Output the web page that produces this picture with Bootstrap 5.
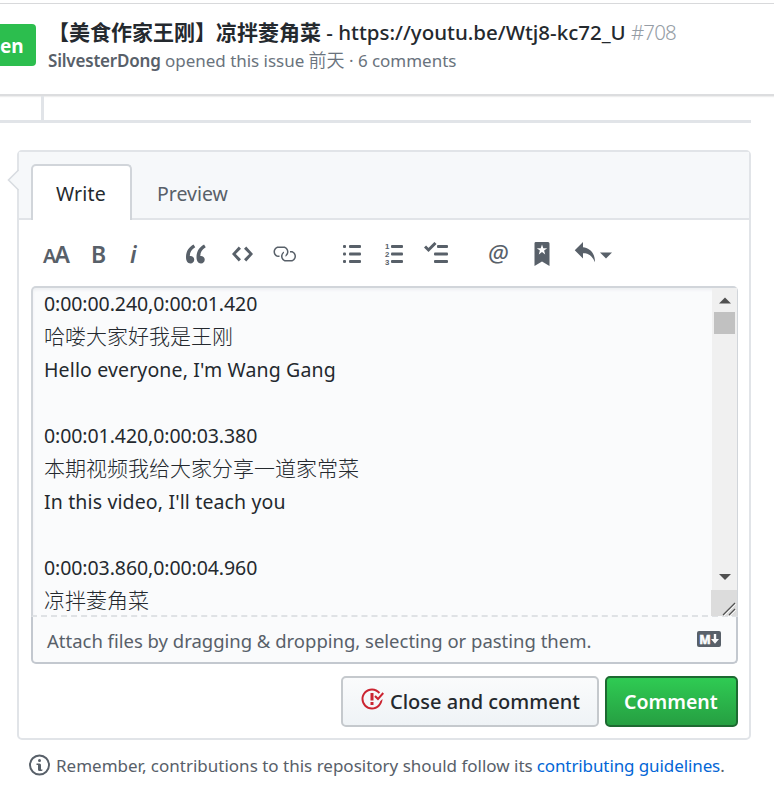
<!DOCTYPE html>
<html lang="en">
<head>
<meta charset="utf-8">
<title>Issue #708</title>
<link href="https://cdn.jsdelivr.net/npm/bootstrap@5.3.0/dist/css/bootstrap.min.css" rel="stylesheet">
<style>
body{width:774px;height:794px;overflow:hidden;background:#fff;color:#24292e;font-family:"Noto Sans","Noto Sans CJK SC",sans-serif;font-size:19.5px;line-height:33px}
svg{display:block;fill:currentColor;flex:none}
.text-line{white-space:nowrap}
.han{font-family:"Noto Sans CJK SC",sans-serif;font-size:21px;letter-spacing:0;font-weight:300}
.issue-head{height:93px;margin-top:3px;border-top:1px solid #d8d9db;border-bottom:2px solid #dcdddf;box-shadow:0 1px 1px #eee;padding-top:13px}
.state-tag{width:36px;height:42px;margin-top:7px;background:#2cbe4e;color:#fff;border-radius:0 4px 4px 0;font-weight:700;font-size:19px;line-height:44px;overflow:hidden}
.head-text{margin-left:12px}
.issue-title{font-weight:500;font-size:20.5px;line-height:28px;height:28px}
.issue-title .han{font-weight:700}
.issue-title .num{color:#959da5;font-weight:300;letter-spacing:-.9px}
.issue-meta{font-size:17px;line-height:28px;height:28px;color:#6a737d;letter-spacing:-.03px}
.issue-meta .han{font-size:18px;font-weight:350}
.issue-meta b{font-weight:600;color:#586069;letter-spacing:-.2px}
.thread-end{width:751px;height:27px;border-bottom:3px solid #e1e4e8;padding-left:41px}
.thread-end i{display:block;width:3px;height:24px;background:#e1e4e8}
.panel{position:relative;width:734px;height:590px;margin:27px 0 0 17px;border:2px solid #e1e4e8;border-radius:5px}
.pointer{position:absolute;left:-12px;top:16px}
.tabs{height:68px;background:#f6f8fa;border-bottom:2px solid #e1e4e8;padding:12px 0 0 12px}
.tab-on{width:101px;height:56px;background:#fff;border:2px solid #d1d5da;border-bottom:0;border-radius:5px 5px 0 0;padding-left:23px;line-height:55px;letter-spacing:.15px}
.tab-off{padding-left:25px;line-height:59px;color:#586069}
.tools{display:grid;grid-template-columns:48px 39px 56px 46px 40px 71px 42px 39px 65px 45px 40px 26px 20px;height:66px;padding:2px 0 0 24px;align-items:center;color:#586069}
.glyph{font-size:23px;font-weight:600;line-height:30px;height:31px}
.size-pair{letter-spacing:-1.6px;white-space:nowrap}
.size-pair small{font-size:19.5px}
.at-sign{font-size:24px;font-weight:400;height:33px;margin-left:-1px}
.editor{width:707px;height:331px;margin-left:12px;border:2px solid #d1d5da;border-right-width:1px;border-bottom:2px dashed #dfe2e5;border-radius:5px 5px 0 0;background:#fafbfc;box-shadow:inset 0 2px 3px #edeff2}
.editor-text{flex:1;padding-left:11px;margin-top:-1px}
.editor-text div{height:33px;letter-spacing:.14px}
.editor-text .stamp{letter-spacing:-.08px}
.editor-text .han{line-height:31px;letter-spacing:0}
.bar{width:25px;height:328px;background:#f0f0f0;color:#505050}
.thumb{width:21px;height:22px;background:#c1c1c1;margin:8px 0 0 2px}
.corner{width:26px;height:26px;margin-left:-1px;background:#dcdcdc;color:#505050}
.attach{width:707px;height:47px;margin-left:12px;border:2px solid #c3c8cf;border-top:0;border-radius:0 0 5px 5px;background:#fafbfc;padding:2px 15px 0 14px;color:#586069;font-size:18.5px;letter-spacing:-.01px}
.attach svg{margin-top:-3px}
.actions{margin:12px 11px 0 0;gap:6px}
.act{height:51px;border-radius:5px;font-weight:600;border:2px solid #c5c9cd;padding:0;font-size:19.5px}
.act-close{width:258px;background:linear-gradient(#fafbfc,#eff3f6);color:#24292e;padding-left:17px;font-weight:500;font-size:20px}
.act-close svg{color:#cb2431;margin:-6px 6px 0 0}
.act-send{width:133px;background:linear-gradient(#2fcb53,#269f42);border-color:#1d6a31;color:#fff;padding-left:17px}
.note{margin:9px 0 0 29px;color:#586069;font-size:17px}
.note svg{margin:-1px 6px 0 0}
.note a{color:#0366d6;margin-left:4px;letter-spacing:-.1px}
</style>
<script src="https://cdn.jsdelivr.net/npm/bootstrap@5.3.0/dist/js/bootstrap.bundle.min.js"></script>
</head>
<body>
<header class="issue-head d-flex">
  <div class="state-tag">en</div>
  <div class="head-text text-line">
    <div class="issue-title"><span class="han">【美食作家王刚】凉拌菱角菜</span> - https://youtu.be/Wtj8-kc72_U <span class="num">#708</span></div>
    <div class="issue-meta"><b>SilvesterDong</b> opened this issue <span class="han">前天</span> · 6 comments</div>
  </div>
</header>
<div class="thread-end"><i></i></div>
<main class="panel">
  <svg class="pointer" width="13" height="24" viewBox="0 0 13 24"><path d="M13 1 2 12l11 11z" fill="#f6f8fa"/><path d="M11.500 2 1.500 12l10 10" fill="none" stroke="#d8dce1" stroke-width="1.6"/></svg>
  <div class="tabs d-flex"><div class="tab-on">Write</div><div class="tab-off">Preview</div></div>
  <div class="tools">
    <span class="glyph size-pair"><small>A</small>A</span>
    <span class="glyph">B</span>
    <span class="glyph fst-italic">i</span>
    <svg width="21" height="24" viewBox="0 0 14 16"><path d="M6.160 3.500C3.730 5.060 2.550 6.670 2.550 9.360c.16-.05.3-.05.44-.05 1.270 0 2.500.86 2.500 2.410 0 1.610-1.030 2.610-2.500 2.610-1.900 0-2.990-1.520-2.990-4.250 0-3.800 1.750-6.530 5.020-8.420L6.160 3.500zm7 0c-2.430 1.560-3.610 3.170-3.610 5.860.16-.05.3-.05.44-.05 1.270 0 2.500.86 2.500 2.410 0 1.610-1.030 2.610-2.500 2.610-1.890 0-2.980-1.520-2.980-4.250 0-3.800 1.750-6.530 5.020-8.420l1.140 1.840z"/></svg>
    <svg width="21" height="24" viewBox="0 0 14 16"><path d="M9.500 3L8 4.500 11.500 8 8 11.500 9.500 13 14 8 9.500 3zm-5 0L0 8l4.500 5L6 11.500 2.500 8 6 4.500 4.500 3z"/></svg>
    <svg width="24" height="24" viewBox="0 0 16 16"><path d="M4 9h1v1H4c-1.500 0-3-1.690-3-3.500S2.550 3 4 3h4c1.450 0 3 1.690 3 3.500 0 1.410-.91 2.720-2 3.250V8.590c.58-.45 1-1.270 1-2.090C10 5.220 8.980 4 8 4H4c-.98 0-2 1.220-2 2.500S3 9 4 9zm9-3h-1v1h1c1 0 2 1.220 2 2.500S13.980 12 13 12H9c-.98 0-2-1.220-2-2.500 0-.83.42-1.640 1-2.090V6.250c-1.090.53-2 1.840-2 3.250C6 11.310 7.550 13 9 13h4c1.450 0 3-1.690 3-3.500S14.500 6 13 6z"/></svg>
    <svg width="18" height="24" viewBox="0 0 18 24"><rect y="3" width="3" height="3" rx="1"/><rect y="10.500" width="3" height="3" rx="1"/><rect y="18" width="3" height="3" rx="1"/><rect x="6" y="3" width="12" height="3" rx="1"/><rect x="6" y="10.500" width="12" height="3" rx="1"/><rect x="6" y="18" width="12" height="3" rx="1"/></svg>
    <svg class="overflow-visible" width="18" height="24" viewBox="0 0 18 24"><g font-family="Liberation Sans, sans-serif" font-weight="700" font-size="7.800"><text x="0" y="7">1</text><text x="0" y="15">2</text><text x="0" y="22.800">3</text></g><rect x="6" y="3" width="12" height="3" rx="1"/><rect x="6" y="10.500" width="12" height="3" rx="1"/><rect x="6" y="18" width="12" height="3" rx="1"/></svg>
    <svg width="24" height="24" viewBox="0 0 24 24"><path d="M1 4.500 4.500 8 11.500 1" fill="none" stroke="currentColor" stroke-width="3"/><rect x="13" y="3" width="11" height="3" rx="1"/><rect x="10" y="10.500" width="14" height="3" rx="1"/><rect x="10" y="18" width="14" height="3" rx="1"/></svg>
    <span class="glyph at-sign fst-italic">@</span>
    <svg width="17" height="24" viewBox="0 0 17 24"><path d="M1.500 0h12.500a1.500 1.500 0 0 1 1.500 1.500V24L8 19.500.500 24V1.500A1.500 1.500 0 0 1 1.500 0zM8 2.500 6.700 6.200H2.800L5.900 8.600 4.800 12.400 8 10.100l3.200 2.300-1.100-3.800 3.100-2.400H9.300z"/></svg>
    <svg width="21" height="24" viewBox="0 0 14 16"><path d="M6 3.500c3.920.44 8 3.125 8 10-2.312-5.062-4.750-6-8-6V11L.500 5.500 6 0v3.500z"/></svg>
    <svg width="12" height="10" viewBox="0 0 12 10"><path d="M0 3.500h12L6 9.500z"/></svg>
  </div>
  <div class="editor d-flex">
    <div class="editor-text text-line">
      <div class="stamp">0:00:00.240,0:00:01.420</div>
      <div class="han">哈喽大家好我是王刚</div>
      <div>Hello everyone, I'm Wang Gang</div>
      <div></div>
      <div class="stamp">0:00:01.420,0:00:03.380</div>
      <div class="han">本期视频我给大家分享一道家常菜</div>
      <div>In this video, I'll teach you</div>
      <div></div>
      <div class="stamp">0:00:03.860,0:00:04.960</div>
      <div class="han">凉拌菱角菜</div>
    </div>
    <div class="bar d-flex flex-column">
      <svg class="mt-2" style="margin-left:7px" width="12" height="8" viewBox="0 0 12 8"><path d="M0 7.500 6 1.500l6 6z"/></svg>
      <div class="thumb"></div>
      <svg class="mt-auto mb-2" style="margin-left:7px" width="12" height="8" viewBox="0 0 12 8"><path d="M0 0h12L6 6z"/></svg>
      <div class="corner"><svg width="26" height="26" viewBox="0 0 26 26"><path d="M12 25 24 13M18 25l6-6" fill="none" stroke="#505050" stroke-width="1.200"/><path d="M13 26 25 14M19 26l6-6" fill="none" stroke="#fff" stroke-width=".8"/></svg></div>
    </div>
  </div>
  <div class="attach d-flex align-items-center justify-content-between text-line"><span>Attach files by dragging &amp; dropping, selecting or pasting them.</span>
    <svg width="24" height="16" viewBox="0 0 24 16"><rect width="24" height="16" rx="2"/><text x="2.200" y="12.700" font-family="Noto Sans, sans-serif" font-weight="800" font-size="13" fill="#fafbfc" stroke="#fafbfc" stroke-width=".5" textLength="11.500" lengthAdjust="spacingAndGlyphs">M</text><path d="M16.800 3h2.400v5H22l-4 4.700L14 8h2.800z" fill="#fafbfc"/></svg>
  </div>
  <div class="actions d-flex justify-content-end">
    <button class="btn act act-close d-flex align-items-center text-line"><svg width="24" height="24" viewBox="0 0 16 16"><path d="M7 10h2v2H7v-2zm2-6H7v5h2V4zm1.500 1.500l-1 1L12 9l4-4.500-1-1L12 7l-1.500-1.500zM8 13.700A5.710 5.710 0 0 1 2.300 8c0-3.140 2.560-5.700 5.700-5.700 1.830 0 3.450.88 4.500 2.200l.92-.92A6.947 6.947 0 0 0 8 1C4.140 1 1 4.140 1 8s3.140 7 7 7 7-3.140 7-7l-1.520 1.520c-.66 2.410-2.860 4.190-5.480 4.190z"/></svg>Close and comment</button>
    <button class="btn act act-send text-start">Comment</button>
  </div>
</main>
<footer class="note text-line d-flex align-items-center"><svg width="21" height="24" viewBox="0 0 14 16"><circle cx="7" cy="8" r="6.350" fill="none" stroke="currentColor" stroke-width="1.300"/><circle cx="7" cy="5" r="1"/><path d="M5 7h2a1 1 0 0 1 1 1v3h1v.3a.7.7 0 0 1-.7.7H7a1 1 0 0 1-1-1V8H5z"/></svg><span>Remember, contributions to this repository should follow its</span><a class="text-decoration-none" href="#">contributing guidelines</a>.</footer>
</body>
</html>
